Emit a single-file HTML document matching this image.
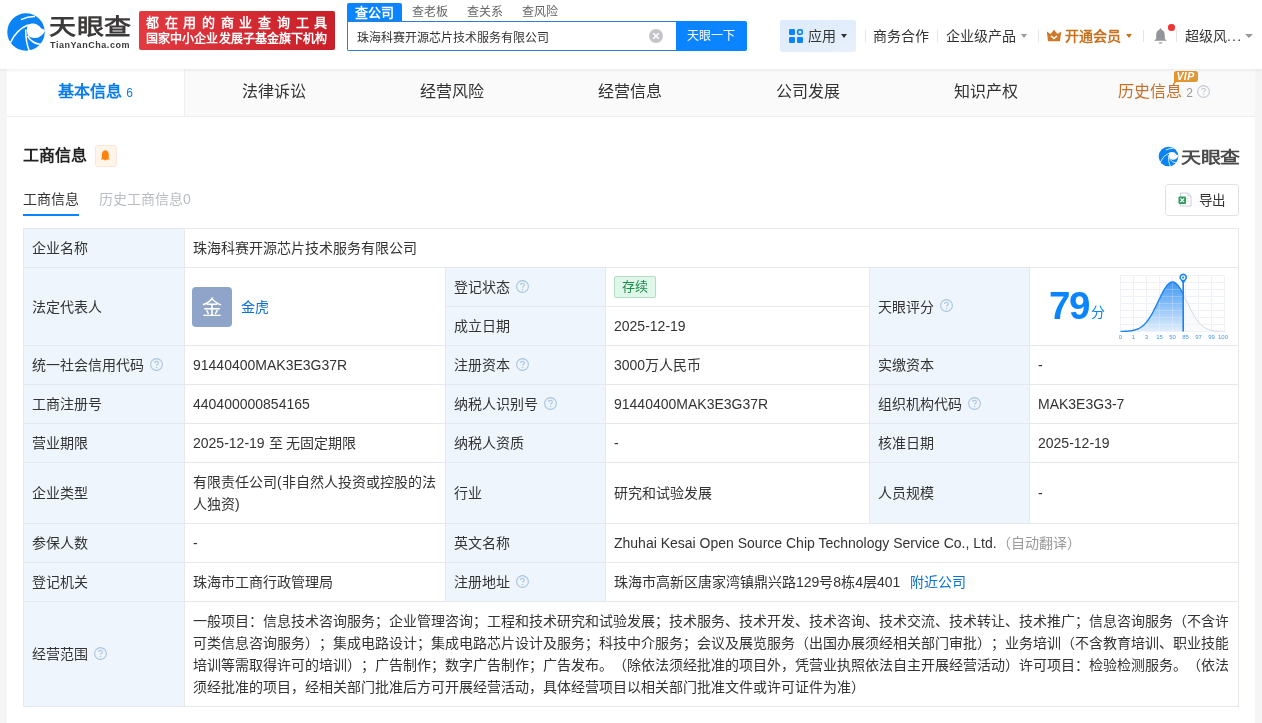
<!DOCTYPE html>
<html lang="zh-CN"><head><meta charset="utf-8">
<style>
*{box-sizing:border-box;margin:0;padding:0}
html,body{width:1262px;height:723px;overflow:hidden}
#tbl,#hdr,#wrap{will-change:transform}
body{text-spacing-trim:space-all;background:#f5f5f5;font-family:"Liberation Sans",sans-serif;color:#333;font-size:14px;position:relative}
.a{position:absolute;white-space:nowrap}
#hdr{position:absolute;left:0;top:0;width:1262px;height:69px;background:#fff;box-shadow:0 1px 4px rgba(0,0,0,.08);z-index:2}
#wrap{position:absolute;left:7px;top:69px;width:1248px;height:654px;background:#fff}
#tabs{position:absolute;left:0;top:0;width:1248px;height:48px;background:#fafafa;border-bottom:1px solid #eee}
.tab{position:absolute;top:0;height:47px;line-height:45px;font-size:16px;text-align:center;color:#333}
table{position:absolute;left:16px;top:159px;border-collapse:collapse;table-layout:fixed}
td{border:1px solid #e4eaf1;padding:8px 8px 8px 8px;line-height:22px;font-size:14px;vertical-align:middle;color:#333}
td.l{background:#eef5fc}
#tbl{position:absolute;left:0;top:0;width:1262px;height:723px;z-index:1}
.c{position:absolute;border:1px solid #e5e9ef}
.t{position:absolute;left:8px;top:50%;transform:translateY(-50%);line-height:22px;font-size:14px;color:#333;white-space:nowrap}
.lk{color:#0a6fd6}
.av{position:absolute;left:7px;top:19px;width:40px;height:40px;border-radius:4px;background:#8ea4c9;color:#fff;font-size:20px;line-height:42px;text-align:center}
.tag{position:absolute;left:8px;top:8px;height:22px;width:42px;text-align:center;border:1px solid #b3dcc2;background:#dff7e8;color:#1f8c4d;border-radius:2px;font-size:13px;line-height:20px}
.jl{text-align:justify;text-align-last:justify;white-space:nowrap;overflow:hidden;height:22px}
.jl.last{text-align-last:left}
.q{display:inline-block;width:13px;height:13px;vertical-align:middle;margin-left:6px;position:relative;top:-2px}
.q svg{position:absolute;left:0;top:0}
</style></head><body>

<div id="hdr">
  <!-- logo -->
  <svg class="a" style="left:6px;top:12px" width="40" height="40" viewBox="0 0 40 40">
<circle cx="20" cy="20" r="18.7" fill="#0a84f5"/>
<path d="M21.6 13 C25.5 10.8 31.5 10.5 35.4 16.6 L39.2 18 C37.8 22.5 33 26.5 28.5 26 C25.5 25.8 23.5 25 22 23.5 C20.6 20 20.6 16 21.6 13 Z" fill="#fff"/>
<g stroke="#fff" stroke-width="1.5" fill="none"><path d="M15 7.6 Q22 4.2 29 4.4"/><path d="M4.5 30.5 Q10 18 21.8 13"/><path d="M19.8 17.5 Q19.5 30 23.5 39.5"/><path d="M21.5 24 Q26 31.5 35 32.5"/></g>
</svg>
  <div class="a" style="left:49px;top:12px;font-size:27px;font-weight:bold;color:#3d3a3a;line-height:36px;letter-spacing:0.7px;transform:scaleY(0.82);transform-origin:0 0">天眼查</div>
  <div class="a" style="left:50px;top:40px;font-size:9px;font-weight:bold;color:#3d3a3a;letter-spacing:0.55px;line-height:10px">TianYanCha.com</div>
  <div class="a" style="left:139px;top:11px;width:196px;height:39px;border-radius:2px;background:linear-gradient(90deg,#e23a40,#c81f28)">
    <div class="a" style="left:7px;top:3px;font-size:13px;font-weight:bold;color:#fff;letter-spacing:5.7px;line-height:17px">都在用的商业查询工具</div>
    <div class="a" style="left:7px;top:20px;font-size:12px;font-weight:bold;color:#fff;line-height:17px;letter-spacing:0.1px">国家中小企业发展子基金旗下机构</div>
  </div>
  <!-- search -->
  <div class="a" style="left:347px;top:3px;width:55px;height:19px;background:#0a84ff;border-radius:2px 2px 0 0;color:#fff;font-size:13px;line-height:19px;text-align:center;font-weight:bold">查公司</div>
  <div class="a" style="left:412px;top:3px;font-size:12px;line-height:19px;color:#666">查老板</div>
  <div class="a" style="left:467px;top:3px;font-size:12px;line-height:19px;color:#666">查关系</div>
  <div class="a" style="left:522px;top:3px;font-size:12px;line-height:19px;color:#666">查风险</div>
  <div class="a" style="left:347px;top:21px;width:330px;height:30px;border:1px solid #2b7fd6;border-right:none;border-radius:0 0 0 2px;background:#fff"></div>
  <div class="a" style="left:357px;top:23px;line-height:30px;font-size:12px;color:#333">珠海科赛开源芯片技术服务有限公司</div>
  <div class="a" style="left:649px;top:29px;width:14px;height:14px;border-radius:50%;background:#c4c5ca">
    <svg width="14" height="14" viewBox="0 0 14 14" style="position:absolute;left:0;top:0"><path d="M4.3 4.3L9.7 9.7M9.7 4.3L4.3 9.7" stroke="#fff" stroke-width="1.5"/></svg>
  </div>
  <div class="a" style="left:676px;top:21px;width:71px;height:30px;background:#0a84ff;border-radius:0 2px 2px 0;color:#fff;font-size:12px;line-height:30px;text-align:center;padding-right:1px">天眼一下</div>
  <!-- right nav -->
  <div class="a" style="left:780px;top:20px;width:76px;height:32px;background:linear-gradient(160deg,#ddebfc 0%,#e3eefb 60%,#e8f0fa 100%);border-radius:2.5px"></div>
  <svg class="a" style="left:789px;top:29px" width="14" height="14" viewBox="0 0 14 14">
    <rect x="0" y="0" width="6" height="6" rx="1.2" fill="#0a84ff"/>
    <circle cx="11" cy="3" r="2.4" fill="none" stroke="#0a84ff" stroke-width="1.6"/>
    <rect x="0" y="8" width="6" height="6" rx="1.2" fill="#0a84ff"/>
    <rect x="8" y="8" width="6" height="6" rx="1.2" fill="#0a84ff"/>
  </svg>
  <div class="a" style="left:808px;top:25px;font-size:14px;line-height:22px;color:#333">应用</div>
  <div class="a" style="left:841px;top:34px;width:0;height:0;border-left:3px solid transparent;border-right:3px solid transparent;border-top:4px solid #333"></div>
  <div class="a" style="left:865px;top:30px;width:1px;height:12px;background:#e5e5e5"></div>
  <div class="a" style="left:873px;top:25px;font-size:14px;line-height:22px;color:#333">商务合作</div>
  <div class="a" style="left:937px;top:30px;width:1px;height:12px;background:#e5e5e5"></div>
  <div class="a" style="left:946px;top:25px;font-size:14px;line-height:22px;color:#333">企业级产品</div>
  <div class="a" style="left:1021px;top:34px;width:0;height:0;border-left:3px solid transparent;border-right:3px solid transparent;border-top:4px solid #999"></div>
  <div class="a" style="left:1038px;top:30px;width:1px;height:12px;background:#e5e5e5"></div>
  <svg class="a" style="left:1046px;top:29px" width="16" height="13" viewBox="0 0 16 13">
    <path d="M0.8 2.5 L4.5 5 L8 0.8 L11.5 5 L15.2 2.5 L14 12.2 L2 12.2 Z" fill="#d0782a"/>
    <path d="M5 7 L8 9.6 L11 7" stroke="#fff" stroke-width="1.5" fill="none"/>
  </svg>
  <div class="a" style="left:1065px;top:25px;font-size:14px;line-height:22px;color:#c8701e;font-weight:bold">开通会员</div>
  <div class="a" style="left:1126px;top:34px;width:0;height:0;border-left:3px solid transparent;border-right:3px solid transparent;border-top:4px solid #c8701e"></div>
  <div class="a" style="left:1143px;top:30px;width:1px;height:12px;background:#e5e5e5"></div>
  <svg class="a" style="left:1153px;top:28px" width="15" height="16" viewBox="0 0 15 16">
    <circle cx="7.5" cy="1.2" r="1" fill="#939598"/>
    <path d="M7.5 1.5 C4.2 1.8 3.2 4.5 3.2 7.5 L3.2 11 L1 12.8 L14 12.8 L11.8 11 L11.8 7.5 C11.8 4.5 10.8 1.8 7.5 1.5Z" fill="#939598"/>
    <rect x="5.8" y="14.2" width="3.4" height="1.4" rx="0.7" fill="#939598"/>
  </svg>
  <div class="a" style="left:1168px;top:24px;width:6.5px;height:6.5px;border-radius:50%;background:#ee3434"></div>
  <div class="a" style="left:1176px;top:30px;width:1px;height:12px;background:#e5e5e5"></div>
  <div class="a" style="left:1185px;top:25px;font-size:14px;line-height:22px;color:#333">超级风<span style="letter-spacing:1.2px">...</span></div>
  <div class="a" style="left:1245px;top:34px;width:0;height:0;border-left:4px solid transparent;border-right:4px solid transparent;border-top:4px solid #999"></div>
</div>

<div id="wrap">
  <div id="tabs">
    <div class="a" style="left:177px;top:0;width:1px;height:47px;background:#efefef"></div><div class="tab" style="left:0;width:177px;background:#fff;color:#0a7ce8;font-weight:bold">基本信息<span style="font-size:12px;font-weight:normal;margin-left:4px">6</span></div>
    <div class="tab" style="left:178px;width:178px">法律诉讼</div>
    <div class="tab" style="left:356px;width:178px">经营风险</div>
    <div class="tab" style="left:534px;width:178px">经营信息</div>
    <div class="tab" style="left:712px;width:178px">公司发展</div>
    <div class="tab" style="left:890px;width:178px">知识产权</div>
    <div class="tab" style="left:1068px;width:180px;color:#c8702a;padding-right:2px">历史信息<span style="font-size:12px;color:#999;margin-left:4px">2</span><span class="q" style="margin-left:4px;top:-1px"><svg width="13" height="13" viewBox="0 0 13 13"><circle cx="6.5" cy="6.5" r="5.9" fill="none" stroke="#c3cad4" stroke-width="1.1"/><path d="M4.6 5.1 C4.6 3.9 5.5 3.3 6.5 3.3 C7.6 3.3 8.4 4 8.4 5 C8.4 6.2 6.6 6.3 6.6 7.6" fill="none" stroke="#c3cad4" stroke-width="1.1"/><circle cx="6.6" cy="9.5" r="0.7" fill="#c3cad4"/></svg></span></div>
    <div class="a" style="left:1167px;top:2px;width:24px;height:11px;background:linear-gradient(90deg,#e8922a,#dd9a3a);border-radius:2.5px 2.5px 2.5px 0;color:#fff;font-size:10.5px;font-weight:bold;font-style:italic;line-height:11px;text-align:center;letter-spacing:0.4px;padding-right:1px">VIP</div>
    <div class="a" style="left:1167px;top:12px;width:0;height:0;border-top:3px solid #e8922a;border-right:4px solid transparent"></div>
  </div>

  <div class="a" style="left:15.7px;top:74.5px;font-size:16px;font-weight:bold;line-height:24px;color:#222">工商信息</div>
  <div class="a" style="left:88px;top:76px;width:22px;height:22px;background:#fff4ea;border:1px solid #fbe7d6;border-radius:2.5px">
    <svg width="11" height="12" viewBox="0 0 11 12" style="position:absolute;left:4.3px;top:4px"><path d="M5.3 0.3C2.7 0.5 1.9 2.6 1.9 5L1.9 8.2 L0.6 9.6 L4 9.6 L5.3 10.8 L6.6 9.6 L10 9.6 L8.7 8.2 L8.7 5C8.7 2.6 7.9 0.5 5.3 0.3Z" fill="#ff8208"/></svg>
  </div>
  <!-- right logo -->
  <svg class="a" style="left:1151px;top:77px" width="21" height="21" viewBox="0 0 40 40">
<circle cx="20" cy="20" r="18.7" fill="#0a84f5"/>
<path d="M21.6 13 C25.5 10.8 31.5 10.5 35.4 16.6 L39.2 18 C37.8 22.5 33 26.5 28.5 26 C25.5 25.8 23.5 25 22 23.5 C20.6 20 20.6 16 21.6 13 Z" fill="#fff"/>
<g stroke="#fff" stroke-width="1.5" fill="none"><path d="M15 7.6 Q22 4.2 29 4.4"/><path d="M4.5 30.5 Q10 18 21.8 13"/><path d="M19.8 17.5 Q19.5 30 23.5 39.5"/><path d="M21.5 24 Q26 31.5 35 32.5"/></g>
</svg>
  <div class="a" style="left:1174px;top:78px;font-size:20px;font-weight:600;line-height:26px;color:#4a4a4a;letter-spacing:-0.4px;transform:scaleY(0.8);transform-origin:0 0">天眼查</div>
  <!-- subtabs -->
  <div class="a" style="left:16px;top:119px;font-size:14px;line-height:22px;color:#333">工商信息</div>
  <div class="a" style="left:16px;top:145px;width:56px;height:2px;background:#0a84ff"></div>
  <div class="a" style="left:92px;top:119px;font-size:14px;line-height:22px;color:#b8bcc3">历史工商信息0</div>
  <!-- export -->
  <div class="a" style="left:1158px;top:115px;width:74px;height:32px;border:1px solid #dfe3e8;border-radius:3px;background:#fff"></div>
  <svg class="a" style="left:1171px;top:123px" width="14" height="15" viewBox="0 0 14 15">
    <path d="M2.5 1 L10 1 L13 4 L13 14 L2.5 14 Z" fill="#fff" stroke="#ccd1d8" stroke-width="1"/>
    <path d="M10 1 L10 4 L13 4" fill="none" stroke="#ccd1d8" stroke-width="0.8"/>
    <rect x="0.5" y="4.5" width="7.5" height="7.5" rx="1" fill="#2a9d5c"/>
    <path d="M2.4 6.4 L6.1 10.1 M6.1 6.4 L2.4 10.1" stroke="#fff" stroke-width="1.3"/>
    <path d="M9.2 6.5 L11.2 6.5 M9.2 9.2 L11.2 9.2" stroke="#d5d9df" stroke-width="0.9"/>
  </svg>
  <div class="a" style="left:1191.5px;top:121px;font-size:13.5px;line-height:22px;color:#333">导出</div>
</div>
<div id="tbl"><!--TABLE-->
<div class="c" style="left:23px;top:228px;width:162px;height:40px;background:#eef5fc"><div class="t" style="">企业名称</div></div>
<div class="c" style="left:184px;top:228px;width:1055px;height:40px;background:#fff"><div class="t" style="">珠海科赛开源芯片技术服务有限公司</div></div>
<div class="c" style="left:23px;top:267px;width:162px;height:79px;background:#eef5fc"><div class="t" style="">法定代表人</div></div>
<div class="c" style="left:184px;top:267px;width:262px;height:79px;background:#fff"><div class="av">金</div><div class="t lk" style="left:56px">金虎</div></div>
<div class="c" style="left:445px;top:267px;width:161px;height:40px;background:#eef5fc"><div class="t" style="">登记状态<span class="q"><svg width="13" height="13" viewBox="0 0 13 13"><circle cx="6.5" cy="6.5" r="5.9" fill="none" stroke="#a9c3e0" stroke-width="1.1"/><path d="M4.6 5.1 C4.6 3.9 5.5 3.3 6.5 3.3 C7.6 3.3 8.4 4 8.4 5 C8.4 6.2 6.6 6.3 6.6 7.6" fill="none" stroke="#a9c3e0" stroke-width="1.1"/><circle cx="6.6" cy="9.5" r="0.7" fill="#a9c3e0"/></svg></span></div></div>
<div class="c" style="left:445px;top:306px;width:161px;height:40px;background:#eef5fc"><div class="t" style="">成立日期</div></div>
<div class="c" style="left:605px;top:267px;width:265px;height:40px;background:#fff"><div class="tag">存续</div></div>
<div class="c" style="left:605px;top:306px;width:265px;height:40px;background:#fff"><div class="t" style="">2025-12-19</div></div>
<div class="c" style="left:869px;top:267px;width:161px;height:79px;background:#eef5fc"><div class="t" style="">天眼评分<span class="q"><svg width="13" height="13" viewBox="0 0 13 13"><circle cx="6.5" cy="6.5" r="5.9" fill="none" stroke="#a9c3e0" stroke-width="1.1"/><path d="M4.6 5.1 C4.6 3.9 5.5 3.3 6.5 3.3 C7.6 3.3 8.4 4 8.4 5 C8.4 6.2 6.6 6.3 6.6 7.6" fill="none" stroke="#a9c3e0" stroke-width="1.1"/><circle cx="6.6" cy="9.5" r="0.7" fill="#a9c3e0"/></svg></span></div></div>
<div class="c" style="left:1029px;top:267px;width:210px;height:79px;background:#fff"><div class="a" style="left:19px;top:13px;font-size:38.5px;font-weight:bold;color:#0a84ff;line-height:50px;letter-spacing:-1.3px">79</div><div class="a" style="left:61px;top:34px;font-size:14px;color:#0a84ff;line-height:20px">分</div><svg style="position:absolute;left:87px;top:3px" width="114" height="74" viewBox="0 0 114 74">
<defs><linearGradient id="gf" x1="0" y1="0" x2="0" y2="1"><stop offset="0" stop-color="#3d97f5"/><stop offset="1" stop-color="#e3effc"/></linearGradient></defs>
<g stroke="#e9eff6" stroke-width="1"><line x1="3.5" y1="4.5" x2="3.5" y2="60.5"/><line x1="16.5" y1="4.5" x2="16.5" y2="60.5"/><line x1="29.5" y1="4.5" x2="29.5" y2="60.5"/><line x1="42.5" y1="4.5" x2="42.5" y2="60.5"/><line x1="55.5" y1="4.5" x2="55.5" y2="60.5"/><line x1="68.5" y1="4.5" x2="68.5" y2="60.5"/><line x1="81.5" y1="4.5" x2="81.5" y2="60.5"/><line x1="94.5" y1="4.5" x2="94.5" y2="60.5"/><line x1="107.5" y1="4.5" x2="107.5" y2="60.5"/><line x1="3.5" y1="4.5" x2="107.5" y2="4.5"/><line x1="3.5" y1="11.5" x2="107.5" y2="11.5"/><line x1="3.5" y1="18.5" x2="107.5" y2="18.5"/><line x1="3.5" y1="25.5" x2="107.5" y2="25.5"/><line x1="3.5" y1="32.5" x2="107.5" y2="32.5"/><line x1="3.5" y1="39.5" x2="107.5" y2="39.5"/><line x1="3.5" y1="46.5" x2="107.5" y2="46.5"/><line x1="3.5" y1="53.5" x2="107.5" y2="53.5"/><line x1="3.5" y1="60.5" x2="107.5" y2="60.5"/></g>
<path d="M66.20 23.09 L66.50 23.68 L67.00 24.68 L67.50 25.69 L68.00 26.72 L68.50 27.76 L69.00 28.80 L69.50 29.85 L70.00 30.90 L70.50 31.95 L71.00 32.99 L71.50 34.03 L72.00 35.06 L72.50 36.08 L73.00 37.09 L73.50 38.08 L74.00 39.06 L74.50 40.02 L75.00 40.96 L75.50 41.89 L76.00 42.78 L76.50 43.66 L77.00 44.51 L77.50 45.34 L78.00 46.14 L78.50 46.92 L79.00 47.67 L79.50 48.40 L80.00 49.09 L80.50 49.76 L81.00 50.40 L81.50 51.02 L82.00 51.61 L82.50 52.17 L83.00 52.71 L83.50 53.22 L84.00 53.71 L84.50 54.17 L85.00 54.60 L85.50 55.02 L86.00 55.41 L86.50 55.78 L87.00 56.13 L87.50 56.45 L88.00 56.76 L88.50 57.05 L89.00 57.32 L89.50 57.57 L90.00 57.80 L90.50 58.02 L91.00 58.23 L91.50 58.42 L92.00 58.60 L92.50 58.76 L93.00 58.91 L93.50 59.05 L94.00 59.18 L94.50 59.30 L95.00 59.41 L95.50 59.51 L96.00 59.60 L96.50 59.69 L97.00 59.77 L97.50 59.84 L98.00 59.90 L98.50 59.96 L99.00 60.02 L99.50 60.06 L100.00 60.11 L100.50 60.15 L101.00 60.19 L101.50 60.22 L102.00 60.25 L102.50 60.28 L103.00 60.30 L103.50 60.32 L104.00 60.34 L104.50 60.36 L105.00 60.38 L105.50 60.39 L106.00 60.40 L106.50 60.41 L107.00 60.42 L107.50 60.43 L107.5 60.5 L66.20 60.5 Z" fill="#f5f6f8" fill-opacity="0.6"/>
<path d="M3.50 60.43 L4.00 60.42 L4.50 60.41 L5.00 60.40 L5.50 60.39 L6.00 60.38 L6.50 60.36 L7.00 60.34 L7.50 60.32 L8.00 60.30 L8.50 60.28 L9.00 60.25 L9.50 60.22 L10.00 60.19 L10.50 60.15 L11.00 60.11 L11.50 60.06 L12.00 60.02 L12.50 59.96 L13.00 59.90 L13.50 59.84 L14.00 59.77 L14.50 59.69 L15.00 59.60 L15.50 59.51 L16.00 59.41 L16.50 59.30 L17.00 59.18 L17.50 59.05 L18.00 58.91 L18.50 58.76 L19.00 58.60 L19.50 58.42 L20.00 58.23 L20.50 58.02 L21.00 57.80 L21.50 57.57 L22.00 57.32 L22.50 57.05 L23.00 56.76 L23.50 56.45 L24.00 56.13 L24.50 55.78 L25.00 55.41 L25.50 55.02 L26.00 54.60 L26.50 54.17 L27.00 53.71 L27.50 53.22 L28.00 52.71 L28.50 52.17 L29.00 51.61 L29.50 51.02 L30.00 50.40 L30.50 49.76 L31.00 49.09 L31.50 48.40 L32.00 47.67 L32.50 46.92 L33.00 46.14 L33.50 45.34 L34.00 44.51 L34.50 43.66 L35.00 42.78 L35.50 41.89 L36.00 40.96 L36.50 40.02 L37.00 39.06 L37.50 38.08 L38.00 37.09 L38.50 36.08 L39.00 35.06 L39.50 34.03 L40.00 32.99 L40.50 31.95 L41.00 30.90 L41.50 29.85 L42.00 28.80 L42.50 27.76 L43.00 26.72 L43.50 25.69 L44.00 24.68 L44.50 23.68 L45.00 22.70 L45.50 21.74 L46.00 20.80 L46.50 19.89 L47.00 19.02 L47.50 18.17 L48.00 17.36 L48.50 16.59 L49.00 15.86 L49.50 15.17 L50.00 14.53 L50.50 13.94 L51.00 13.39 L51.50 12.90 L52.00 12.46 L52.50 12.08 L53.00 11.75 L53.50 11.48 L54.00 11.27 L54.50 11.12 L55.00 11.03 L55.50 11.00 L56.00 11.03 L56.50 11.12 L57.00 11.27 L57.50 11.48 L58.00 11.75 L58.50 12.08 L59.00 12.46 L59.50 12.90 L60.00 13.39 L60.50 13.94 L61.00 14.53 L61.50 15.17 L62.00 15.86 L62.50 16.59 L63.00 17.36 L63.50 18.17 L64.00 19.02 L64.50 19.89 L65.00 20.80 L65.50 21.74 L66.00 22.70 L66.20 23.09 L66.20 60.5 L3.5 60.5 Z" fill="url(#gf)"/>
<path d="M66.20 23.09 L66.50 23.68 L67.00 24.68 L67.50 25.69 L68.00 26.72 L68.50 27.76 L69.00 28.80 L69.50 29.85 L70.00 30.90 L70.50 31.95 L71.00 32.99 L71.50 34.03 L72.00 35.06 L72.50 36.08 L73.00 37.09 L73.50 38.08 L74.00 39.06 L74.50 40.02 L75.00 40.96 L75.50 41.89 L76.00 42.78 L76.50 43.66 L77.00 44.51 L77.50 45.34 L78.00 46.14 L78.50 46.92 L79.00 47.67 L79.50 48.40 L80.00 49.09 L80.50 49.76 L81.00 50.40 L81.50 51.02 L82.00 51.61 L82.50 52.17 L83.00 52.71 L83.50 53.22 L84.00 53.71 L84.50 54.17 L85.00 54.60 L85.50 55.02 L86.00 55.41 L86.50 55.78 L87.00 56.13 L87.50 56.45 L88.00 56.76 L88.50 57.05 L89.00 57.32 L89.50 57.57 L90.00 57.80 L90.50 58.02 L91.00 58.23 L91.50 58.42 L92.00 58.60 L92.50 58.76 L93.00 58.91 L93.50 59.05 L94.00 59.18 L94.50 59.30 L95.00 59.41 L95.50 59.51 L96.00 59.60 L96.50 59.69 L97.00 59.77 L97.50 59.84 L98.00 59.90 L98.50 59.96 L99.00 60.02 L99.50 60.06 L100.00 60.11 L100.50 60.15 L101.00 60.19 L101.50 60.22 L102.00 60.25 L102.50 60.28 L103.00 60.30 L103.50 60.32 L104.00 60.34 L104.50 60.36 L105.00 60.38 L105.50 60.39 L106.00 60.40 L106.50 60.41 L107.00 60.42 L107.50 60.43" fill="none" stroke="#cfd5dd" stroke-width="1"/>
<g stroke="#ffffff" stroke-opacity="0.22" stroke-width="1"><line x1="3.5" y1="4.5" x2="3.5" y2="60.5"/><line x1="16.5" y1="4.5" x2="16.5" y2="60.5"/><line x1="29.5" y1="4.5" x2="29.5" y2="60.5"/><line x1="42.5" y1="4.5" x2="42.5" y2="60.5"/><line x1="55.5" y1="4.5" x2="55.5" y2="60.5"/><line x1="68.5" y1="4.5" x2="68.5" y2="60.5"/><line x1="81.5" y1="4.5" x2="81.5" y2="60.5"/><line x1="94.5" y1="4.5" x2="94.5" y2="60.5"/><line x1="107.5" y1="4.5" x2="107.5" y2="60.5"/><line x1="3.5" y1="4.5" x2="107.5" y2="4.5"/><line x1="3.5" y1="11.5" x2="107.5" y2="11.5"/><line x1="3.5" y1="18.5" x2="107.5" y2="18.5"/><line x1="3.5" y1="25.5" x2="107.5" y2="25.5"/><line x1="3.5" y1="32.5" x2="107.5" y2="32.5"/><line x1="3.5" y1="39.5" x2="107.5" y2="39.5"/><line x1="3.5" y1="46.5" x2="107.5" y2="46.5"/><line x1="3.5" y1="53.5" x2="107.5" y2="53.5"/><line x1="3.5" y1="60.5" x2="107.5" y2="60.5"/></g>
<path d="M3.50 60.43 L4.00 60.42 L4.50 60.41 L5.00 60.40 L5.50 60.39 L6.00 60.38 L6.50 60.36 L7.00 60.34 L7.50 60.32 L8.00 60.30 L8.50 60.28 L9.00 60.25 L9.50 60.22 L10.00 60.19 L10.50 60.15 L11.00 60.11 L11.50 60.06 L12.00 60.02 L12.50 59.96 L13.00 59.90 L13.50 59.84 L14.00 59.77 L14.50 59.69 L15.00 59.60 L15.50 59.51 L16.00 59.41 L16.50 59.30 L17.00 59.18 L17.50 59.05 L18.00 58.91 L18.50 58.76 L19.00 58.60 L19.50 58.42 L20.00 58.23 L20.50 58.02 L21.00 57.80 L21.50 57.57 L22.00 57.32 L22.50 57.05 L23.00 56.76 L23.50 56.45 L24.00 56.13 L24.50 55.78 L25.00 55.41 L25.50 55.02 L26.00 54.60 L26.50 54.17 L27.00 53.71 L27.50 53.22 L28.00 52.71 L28.50 52.17 L29.00 51.61 L29.50 51.02 L30.00 50.40 L30.50 49.76 L31.00 49.09 L31.50 48.40 L32.00 47.67 L32.50 46.92 L33.00 46.14 L33.50 45.34 L34.00 44.51 L34.50 43.66 L35.00 42.78 L35.50 41.89 L36.00 40.96 L36.50 40.02 L37.00 39.06 L37.50 38.08 L38.00 37.09 L38.50 36.08 L39.00 35.06 L39.50 34.03 L40.00 32.99 L40.50 31.95 L41.00 30.90 L41.50 29.85 L42.00 28.80 L42.50 27.76 L43.00 26.72 L43.50 25.69 L44.00 24.68 L44.50 23.68 L45.00 22.70 L45.50 21.74 L46.00 20.80 L46.50 19.89 L47.00 19.02 L47.50 18.17 L48.00 17.36 L48.50 16.59 L49.00 15.86 L49.50 15.17 L50.00 14.53 L50.50 13.94 L51.00 13.39 L51.50 12.90 L52.00 12.46 L52.50 12.08 L53.00 11.75 L53.50 11.48 L54.00 11.27 L54.50 11.12 L55.00 11.03 L55.50 11.00 L56.00 11.03 L56.50 11.12 L57.00 11.27 L57.50 11.48 L58.00 11.75 L58.50 12.08 L59.00 12.46 L59.50 12.90 L60.00 13.39 L60.50 13.94 L61.00 14.53 L61.50 15.17 L62.00 15.86 L62.50 16.59 L63.00 17.36 L63.50 18.17 L64.00 19.02 L64.50 19.89 L65.00 20.80 L65.50 21.74 L66.00 22.70 L66.20 23.09" fill="none" stroke="#1b82ee" stroke-width="1.4"/>
<line x1="66.20000000000005" y1="60.5" x2="66.20000000000005" y2="9" stroke="#1b82ee" stroke-width="1.6"/>
<path d="M62.600000000000044 7.5 A3.8 3.8 0 1 1 69.80000000000004 7.5 L66.20000000000005 13 Z" fill="#1b82ee"/>
<circle cx="66.20000000000005" cy="6.6" r="2.3" fill="#fff"/>
<circle cx="66.20000000000005" cy="6.6" r="1.1" fill="#1b82ee"/>
<g font-size="6" fill="#4a94e4" font-family="Liberation Sans"><text x="3.5" y="67.6" text-anchor="middle">0</text><text x="16.5" y="67.6" text-anchor="middle">1</text><text x="29.5" y="67.6" text-anchor="middle">3</text><text x="42.5" y="67.6" text-anchor="middle">15</text><text x="55.5" y="67.6" text-anchor="middle">50</text><text x="68.5" y="67.6" text-anchor="middle">85</text><text x="81.5" y="67.6" text-anchor="middle">97</text><text x="94.5" y="67.6" text-anchor="middle">99</text><text x="106.0" y="67.6" text-anchor="middle">100</text></g>
</svg></div>
<div class="c" style="left:23px;top:345px;width:162px;height:40px;background:#eef5fc"><div class="t" style="">统一社会信用代码<span class="q"><svg width="13" height="13" viewBox="0 0 13 13"><circle cx="6.5" cy="6.5" r="5.9" fill="none" stroke="#a9c3e0" stroke-width="1.1"/><path d="M4.6 5.1 C4.6 3.9 5.5 3.3 6.5 3.3 C7.6 3.3 8.4 4 8.4 5 C8.4 6.2 6.6 6.3 6.6 7.6" fill="none" stroke="#a9c3e0" stroke-width="1.1"/><circle cx="6.6" cy="9.5" r="0.7" fill="#a9c3e0"/></svg></span></div></div>
<div class="c" style="left:184px;top:345px;width:262px;height:40px;background:#fff"><div class="t" style="">91440400MAK3E3G37R</div></div>
<div class="c" style="left:445px;top:345px;width:161px;height:40px;background:#eef5fc"><div class="t" style="">注册资本<span class="q"><svg width="13" height="13" viewBox="0 0 13 13"><circle cx="6.5" cy="6.5" r="5.9" fill="none" stroke="#a9c3e0" stroke-width="1.1"/><path d="M4.6 5.1 C4.6 3.9 5.5 3.3 6.5 3.3 C7.6 3.3 8.4 4 8.4 5 C8.4 6.2 6.6 6.3 6.6 7.6" fill="none" stroke="#a9c3e0" stroke-width="1.1"/><circle cx="6.6" cy="9.5" r="0.7" fill="#a9c3e0"/></svg></span></div></div>
<div class="c" style="left:605px;top:345px;width:265px;height:40px;background:#fff"><div class="t" style="">3000万人民币</div></div>
<div class="c" style="left:869px;top:345px;width:161px;height:40px;background:#eef5fc"><div class="t" style="">实缴资本</div></div>
<div class="c" style="left:1029px;top:345px;width:210px;height:40px;background:#fff"><div class="t" style="">-</div></div>
<div class="c" style="left:23px;top:384px;width:162px;height:40px;background:#eef5fc"><div class="t" style="">工商注册号</div></div>
<div class="c" style="left:184px;top:384px;width:262px;height:40px;background:#fff"><div class="t" style="">440400000854165</div></div>
<div class="c" style="left:445px;top:384px;width:161px;height:40px;background:#eef5fc"><div class="t" style="">纳税人识别号<span class="q"><svg width="13" height="13" viewBox="0 0 13 13"><circle cx="6.5" cy="6.5" r="5.9" fill="none" stroke="#a9c3e0" stroke-width="1.1"/><path d="M4.6 5.1 C4.6 3.9 5.5 3.3 6.5 3.3 C7.6 3.3 8.4 4 8.4 5 C8.4 6.2 6.6 6.3 6.6 7.6" fill="none" stroke="#a9c3e0" stroke-width="1.1"/><circle cx="6.6" cy="9.5" r="0.7" fill="#a9c3e0"/></svg></span></div></div>
<div class="c" style="left:605px;top:384px;width:265px;height:40px;background:#fff"><div class="t" style="">91440400MAK3E3G37R</div></div>
<div class="c" style="left:869px;top:384px;width:161px;height:40px;background:#eef5fc"><div class="t" style="">组织机构代码<span class="q"><svg width="13" height="13" viewBox="0 0 13 13"><circle cx="6.5" cy="6.5" r="5.9" fill="none" stroke="#a9c3e0" stroke-width="1.1"/><path d="M4.6 5.1 C4.6 3.9 5.5 3.3 6.5 3.3 C7.6 3.3 8.4 4 8.4 5 C8.4 6.2 6.6 6.3 6.6 7.6" fill="none" stroke="#a9c3e0" stroke-width="1.1"/><circle cx="6.6" cy="9.5" r="0.7" fill="#a9c3e0"/></svg></span></div></div>
<div class="c" style="left:1029px;top:384px;width:210px;height:40px;background:#fff"><div class="t" style="">MAK3E3G3-7</div></div>
<div class="c" style="left:23px;top:423px;width:162px;height:40px;background:#eef5fc"><div class="t" style="">营业期限</div></div>
<div class="c" style="left:184px;top:423px;width:262px;height:40px;background:#fff"><div class="t" style="">2025-12-19 至 无固定期限</div></div>
<div class="c" style="left:445px;top:423px;width:161px;height:40px;background:#eef5fc"><div class="t" style="">纳税人资质</div></div>
<div class="c" style="left:605px;top:423px;width:265px;height:40px;background:#fff"><div class="t" style="">-</div></div>
<div class="c" style="left:869px;top:423px;width:161px;height:40px;background:#eef5fc"><div class="t" style="">核准日期</div></div>
<div class="c" style="left:1029px;top:423px;width:210px;height:40px;background:#fff"><div class="t" style="">2025-12-19</div></div>
<div class="c" style="left:23px;top:462px;width:162px;height:62px;background:#eef5fc"><div class="t" style="">企业类型</div></div>
<div class="c" style="left:184px;top:462px;width:262px;height:62px;background:#fff"><div class="t" style="">有限责任公司(非自然人投资或控股的法<br>人独资)</div></div>
<div class="c" style="left:445px;top:462px;width:161px;height:62px;background:#eef5fc"><div class="t" style="">行业</div></div>
<div class="c" style="left:605px;top:462px;width:265px;height:62px;background:#fff"><div class="t" style="">研究和试验发展</div></div>
<div class="c" style="left:869px;top:462px;width:161px;height:62px;background:#eef5fc"><div class="t" style="">人员规模</div></div>
<div class="c" style="left:1029px;top:462px;width:210px;height:62px;background:#fff"><div class="t" style="">-</div></div>
<div class="c" style="left:23px;top:523px;width:162px;height:40px;background:#eef5fc"><div class="t" style="">参保人数</div></div>
<div class="c" style="left:184px;top:523px;width:262px;height:40px;background:#fff"><div class="t" style="">-</div></div>
<div class="c" style="left:445px;top:523px;width:161px;height:40px;background:#eef5fc"><div class="t" style="">英文名称</div></div>
<div class="c" style="left:605px;top:523px;width:634px;height:40px;background:#fff"><div class="t" style="">Zhuhai Kesai Open Source Chip Technology Service Co., Ltd.<span style="color:#999">（自动翻译）</span></div></div>
<div class="c" style="left:23px;top:562px;width:162px;height:40px;background:#eef5fc"><div class="t" style="">登记机关</div></div>
<div class="c" style="left:184px;top:562px;width:262px;height:40px;background:#fff"><div class="t" style="">珠海市工商行政管理局</div></div>
<div class="c" style="left:445px;top:562px;width:161px;height:40px;background:#eef5fc"><div class="t" style="">注册地址<span class="q"><svg width="13" height="13" viewBox="0 0 13 13"><circle cx="6.5" cy="6.5" r="5.9" fill="none" stroke="#a9c3e0" stroke-width="1.1"/><path d="M4.6 5.1 C4.6 3.9 5.5 3.3 6.5 3.3 C7.6 3.3 8.4 4 8.4 5 C8.4 6.2 6.6 6.3 6.6 7.6" fill="none" stroke="#a9c3e0" stroke-width="1.1"/><circle cx="6.6" cy="9.5" r="0.7" fill="#a9c3e0"/></svg></span></div></div>
<div class="c" style="left:605px;top:562px;width:634px;height:40px;background:#fff"><div class="t" style="">珠海市高新区唐家湾镇鼎兴路129号8栋4层401<span class="lk" style="margin-left:10px">附近公司</span></div></div>
<div class="c" style="left:23px;top:601px;width:162px;height:106px;background:#eef5fc"><div class="t" style="">经营范围<span class="q"><svg width="13" height="13" viewBox="0 0 13 13"><circle cx="6.5" cy="6.5" r="5.9" fill="none" stroke="#a9c3e0" stroke-width="1.1"/><path d="M4.6 5.1 C4.6 3.9 5.5 3.3 6.5 3.3 C7.6 3.3 8.4 4 8.4 5 C8.4 6.2 6.6 6.3 6.6 7.6" fill="none" stroke="#a9c3e0" stroke-width="1.1"/><circle cx="6.6" cy="9.5" r="0.7" fill="#a9c3e0"/></svg></span></div></div>
<div class="c" style="left:184px;top:601px;width:1055px;height:106px;background:#fff"><div class="t" style="width:1035px"><div class="jl">一般项目：信息技术咨询服务；企业管理咨询；工程和技术研究和试验发展；技术服务、技术开发、技术咨询、技术交流、技术转让、技术推广；信息咨询服务（不含许</div><div class="jl">可类信息咨询服务）；集成电路设计；集成电路芯片设计及服务；科技中介服务；会议及展览服务（出国办展须经相关部门审批）；业务培训（不含教育培训、职业技能</div><div class="jl">培训等需取得许可的培训）；广告制作；数字广告制作；广告发布。（除依法须经批准的项目外，凭营业执照依法自主开展经营活动）许可项目：检验检测服务。（依法</div><div class="jl last">须经批准的项目，经相关部门批准后方可开展经营活动，具体经营项目以相关部门批准文件或许可证件为准）</div></div></div>
<!--/TABLE--></div>
</body></html>
